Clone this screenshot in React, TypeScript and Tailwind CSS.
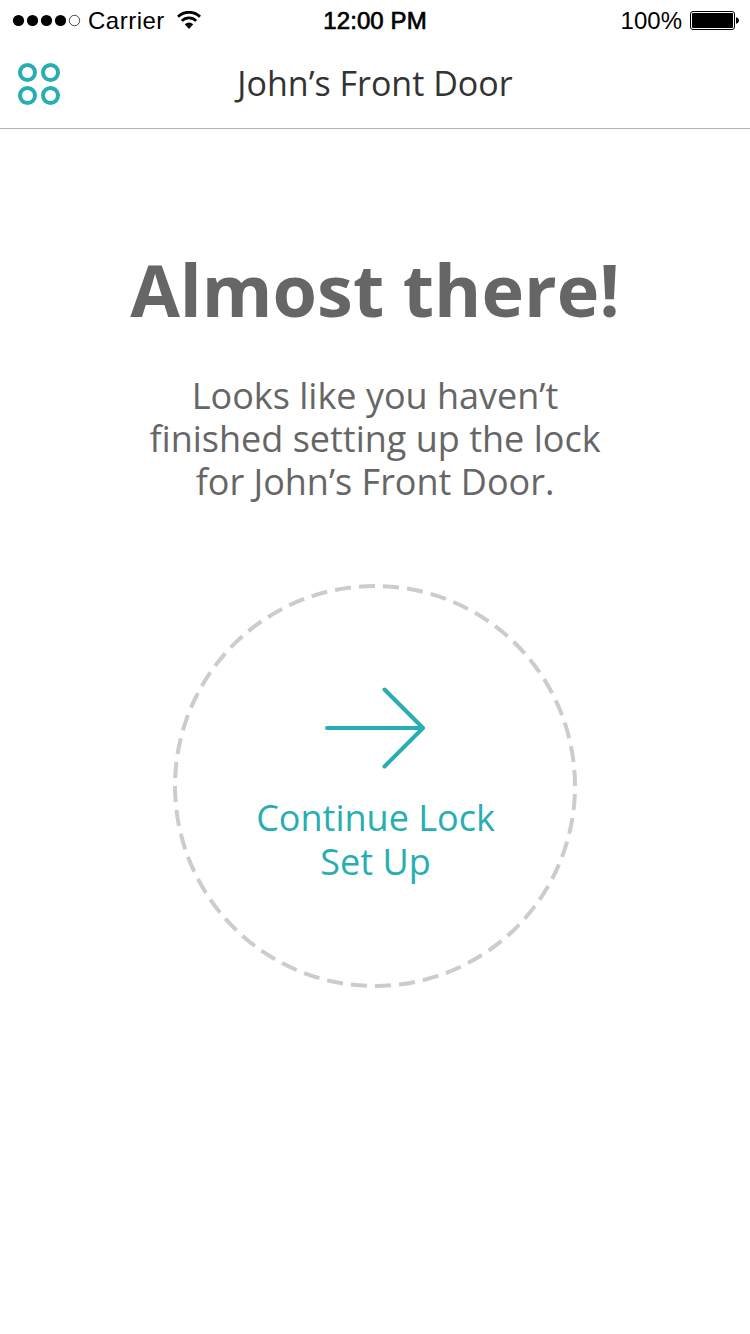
const signalDots = [true, true, true, true, false];

function SignalStrength() {
  return (
    <svg width="70" height="14" viewBox="0 0 70 14" className="block shrink-0">
      {signalDots.map((filled, i) => (
        <circle
          key={i}
          cx={6.5 + i * 14}
          cy={6.5}
          r={filled ? 5.6 : 5.2}
          fill={filled ? "#000" : "none"}
          stroke={filled ? "none" : "#000"}
          strokeWidth={0.7}
        />
      ))}
    </svg>
  );
}

function WifiIcon() {
  return (
    <svg width="24" height="18" viewBox="0 0 24 18" className="block shrink-0">
      <g fill="none" stroke="#000">
        <path d="M1 5.8A15.6 15.6 0 0 1 23 5.8" strokeWidth="2.8" />
        <path d="M4.8 9.9A10.2 10.2 0 0 1 19.2 9.9" strokeWidth="2.7" />
      </g>
      <path d="M7.8 13.2A6.2 6.2 0 0 1 16.2 13.2L12 17.9Z" fill="#000" />
    </svg>
  );
}

function BatteryIcon() {
  return (
    <svg width="50" height="20" viewBox="0 0 50 20" className="block shrink-0">
      <rect x="0.5" y="0.5" width="44" height="18" rx="2.5" fill="none" stroke="#000" />
      <rect x="2" y="2" width="41" height="15" rx="1" fill="#000" />
      <path d="M46 6.2C48 6.6 49 8 49 9.5S48 12.4 46 12.8Z" fill="#000" />
    </svg>
  );
}

function StatusBar() {
  return (
    <div className="grid h-10 grid-cols-[1fr_auto_1fr] pt-[7px] font-['Liberation_Sans',sans-serif] text-[24px] leading-[28px] text-black">
      <div className="flex items-start pl-3">
        <div className="pt-[7px]">
          <SignalStrength />
        </div>
        <span className="ml-[6px] tracking-[0.5px]">Carrier</span>
        <div className="ml-3 pt-1">
          <WifiIcon />
        </div>
      </div>
      <span className="tracking-[0.1px] [-webkit-text-stroke:0.7px_#000]">12:00 PM</span>
      <div className="flex items-start justify-end pr-[10px]">
        <span>100%</span>
        <div className="ml-2 pt-1">
          <BatteryIcon />
        </div>
      </div>
    </div>
  );
}

function NavBar() {
  return (
    <header className="grid h-[89px] grid-cols-[60px_1fr_60px] border-b border-[#b2b2b2]">
      <button type="button" aria-label="Menu" className="flex items-start pt-[23px] pl-[18px]">
        <svg width="42" height="42" viewBox="0 0 42 42" className="block shrink-0" fill="none" stroke="#27aeb3" strokeWidth="4">
          <circle cx="9.5" cy="9.5" r="7.5" />
          <circle cx="32.5" cy="9.5" r="7.5" />
          <circle cx="9.5" cy="32.5" r="7.5" />
          <circle cx="32.5" cy="32.5" r="7.5" />
        </svg>
      </button>
      <h1 className="pt-5 text-center text-[34px] leading-[46px] text-[#333333]">John’s Front Door</h1>
    </header>
  );
}

function ContinueButton() {
  return (
    <button type="button" className="mt-[81px] grid h-[404px] w-[404px] place-items-center text-[#27aeb3]">
      <svg width="404" height="404" viewBox="0 0 404 404" className="col-start-1 row-start-1 block" fill="none">
        <path
          d="M402 202A200 200 0 0 0 2 202A200 200 0 0 0 402 202"
          pathLength={1248}
          stroke="#cccccc"
          strokeWidth="4"
          strokeDasharray="16 8"
        />
      </svg>
      <span className="col-start-1 row-start-1 flex h-full flex-col items-center pt-[102px]">
        <svg width="102" height="84" viewBox="0 0 102 84" className="block shrink-0" fill="none" stroke="currentColor" strokeWidth="4" strokeLinecap="round">
          <path d="M3 42H99M60.5 3.5L99 42L60.5 80.5" strokeLinejoin="round" />
        </svg>
        <span className="mt-[26px] pl-px text-[36px] leading-[44px]">
          Continue Lock
          <br />
          Set Up
        </span>
      </span>
    </button>
  );
}

export default function App() {
  return (
    <div className="flex h-[1334px] w-[750px] flex-col overflow-hidden bg-white font-['Open_Sans',sans-serif]">
      <StatusBar />
      <NavBar />
      <main className="flex flex-col items-center pt-[111px] text-center text-[#666666]">
        <h2 className="text-[72px] leading-[98px] font-bold">Almost there!</h2>
        <p className="mt-[36px] text-[36px] leading-[43px]">
          Looks like you haven’t
          <br />
          finished setting up the lock
          <br />
          for John’s Front Door.
        </p>
        <ContinueButton />
      </main>
    </div>
  );
}
